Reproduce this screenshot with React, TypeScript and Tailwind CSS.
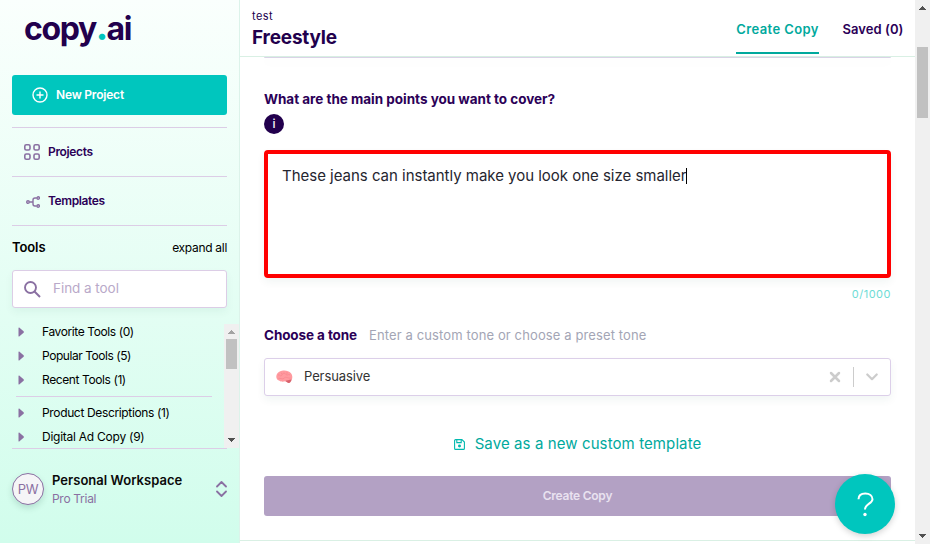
import React from 'react';

function ArrowUp({ color }: { color: string }) {
  return (
    <svg width="7" height="4" viewBox="0 0 7 4" fill={color} shapeRendering="crispEdges">
      <path d="M3 0h1v1h1v1h1v1h1v1H0V3h1V2h1V1h1z" />
    </svg>
  );
}

function ArrowDown() {
  return (
    <svg width="7" height="4" viewBox="0 0 7 4" fill="#505050" shapeRendering="crispEdges">
      <path d="M0 0h7v1H6v1H5v1H4v1H3V3H2V2H1V1H0z" />
    </svg>
  );
}

function ToolRow({ label, track }: { label: string; track: string }) {
  return (
    <div className="flex h-6 items-center pl-[6px]">
      <svg width="6" height="10" viewBox="0 0 6 10" fill="#8a70a2">
        <path d="M.5 1C.5.4 1 .3 1.500.7L5.600 4.300c.4.4.4 1 0 1.400L1.500 9.300C1 9.700.5 9.600.5 9z" />
      </svg>
      <span className={`ml-[18px] whitespace-nowrap text-[12px] text-black ${track}`}>{label}</span>
    </div>
  );
}

function Sidebar() {
  return (
    <aside className="flex h-[543px] w-60 shrink-0 flex-col border-r border-[#dcf3ea] bg-linear-to-b from-[#fafffd] to-[#d1fdec] pl-3">
      <div className="h-[75px] w-[215px] pt-[10px] pl-[12px]">
        <div className="text-[32px] leading-[38px] font-bold tracking-[-1.35px] whitespace-nowrap text-[#22004d]">
          copy<span className="font-black text-[#00c4bc]">.</span>ai
        </div>
      </div>
      <button className="flex h-10 w-[215px] shrink-0 items-center rounded-[3px] bg-[#00c6be] pl-5 text-white">
        <svg width="16" height="16" viewBox="0 0 16 16" fill="none" stroke="currentColor" strokeWidth="1.4">
          <circle cx="8" cy="8" r="7" />
          <path d="M8 4.500v7M4.500 8h7" />
        </svg>
        <span className="ml-2 text-[12px] font-semibold tracking-[-0.2px]">New Project</span>
      </button>
      <div className="mt-3 flex h-[49px] w-[215px] shrink-0 items-center border-t border-[#dccde6] pl-3">
        <svg width="16" height="16" viewBox="0 0 16 16" fill="none" stroke="#8a70a2" strokeWidth="1.600">
          <rect x=".8" y=".8" width="5.200" height="5.200" rx="1.500" />
          <rect x="10" y=".8" width="5.200" height="5.200" rx="1.500" />
          <rect x=".8" y="10" width="5.200" height="5.200" rx="1.500" />
          <rect x="10" y="10" width="5.200" height="5.200" rx="1.500" />
        </svg>
        <span className="ml-2 text-[12px] font-semibold tracking-[-0.35px] text-[#2b0057]">Projects</span>
      </div>
      <div className="flex h-[49px] w-[215px] shrink-0 items-center border-t border-[#dccde6] pl-[14px]">
        <svg width="14" height="12" viewBox="0 0 14 12" fill="none" stroke="#8a70a2" strokeWidth="1.400" className="mt-px">
          <circle cx="2" cy="6" r="1.300" />
          <circle cx="12.200" cy="2" r="1.200" />
          <circle cx="12.200" cy="10" r="1.200" />
          <path d="M3.400 6H7M10.800 2H9Q7 2 7 4V8Q7 10 9 10H10.800" />
        </svg>
        <span className="ml-2 text-[12px] font-semibold tracking-[-0.4px] text-[#2b0057]">Templates</span>
      </div>
      <div className="flex h-[45px] w-[215px] shrink-0 items-center justify-between border-t border-[#dccde6] text-black">
        <span className="text-[13px] font-semibold tracking-[-0.1px]">Tools</span>
        <span className="text-[12px] tracking-[-0.3px]">expand all</span>
      </div>
      <div className="flex h-[38px] w-[215px] shrink-0 items-center rounded-[3px] border border-[#dccde6] bg-white pl-[11px] shadow-[0_4px_8px_rgba(0,80,60,0.05)]">
        <svg width="17" height="17" viewBox="0 0 17 17" fill="none" stroke="#8a70a2" strokeWidth="1.900">
          <circle cx="6.500" cy="6.500" r="5.500" />
          <path d="m10.500 10.500 5.500 5.500" />
        </svg>
        <span className="ml-3 pb-px text-[13.5px] tracking-[-0.05px] text-[#b9a9c9]">Find a tool</span>
      </div>
      <div className="flex h-[140px] shrink-0 justify-between">
        <div className="mt-3 h-32 w-[200px] overflow-hidden">
          <ToolRow label="Favorite Tools (0)" track="tracking-[-0.4px]" />
          <ToolRow label="Popular Tools (5)" track="tracking-[-0.45px]" />
          <ToolRow label="Recent Tools (1)" track="tracking-[-0.4px]" />
          <div className="mt-1 mb-1 ml-1 h-px bg-[#dccde6]" />
          <ToolRow label="Product Descriptions (1)" track="tracking-[-0.35px]" />
          <ToolRow label="Digital Ad Copy (9)" track="tracking-[-0.25px]" />
        </div>
        <div className="mt-4 flex h-[124px] w-[15px] flex-col items-center bg-[#f0f0f0]">
          <div className="flex h-[15px] items-center"><ArrowUp color="#a3a3a3" /></div>
          <div className="h-[30px] w-[11px] bg-[#c1c1c1]" />
          <div className="mt-auto flex h-[17px] items-center"><ArrowDown /></div>
        </div>
      </div>
      <div className="mr-3 flex grow items-start border-t border-[#dccde6] pt-[15px]">
        <div className="mt-[9px] flex size-8 items-center justify-center rounded-full border border-[#8a70a2] bg-[#f5f5f7] pt-px text-[13px] tracking-[-0.2px] text-[#8a70a2] shadow-[0_3px_6px_rgba(0,60,50,0.15)]">
          PW
        </div>
        <div className="ml-2 pt-[7px]">
          <div className="text-[13px] leading-[19px] font-semibold tracking-[0.03px] text-[#0a0a0a]">Personal Workspace</div>
          <div className="text-[12px] leading-[18px] tracking-[-0.3px] text-[#8a70a2]">Pro Trial</div>
        </div>
        <svg width="11" height="16" viewBox="0 0 11 16" className="mt-[17px] ml-auto" fill="none" stroke="#8a70a2" strokeWidth="1.800" strokeLinecap="round" strokeLinejoin="round">
          <path d="m1 5.500 4.500-4.500L10 5.500M1 10.500l4.500 4.500 4.500-4.500" />
        </svg>
      </div>
    </aside>
  );
}

function Header() {
  return (
    <header className="flex h-[57px] shrink-0 justify-between border-b border-[#d9f0e4] pr-[11px] pl-3">
      <div className="pt-[9px] text-[#22004d]">
        <div className="text-[11px] leading-[14px] tracking-[0.4px]">test</div>
        <div className="mt-[2px] text-[19px] leading-[26px] font-bold tracking-[-0.2px]">Freestyle</div>
      </div>
      <nav className="flex h-[54px] gap-[23px] text-[13px] leading-[58px] font-semibold">
        <div className="w-[83px] border-b-2 border-[#00a99d] text-center tracking-[0.4px] whitespace-nowrap text-[#00a99d]">Create Copy</div>
        <div className="w-[62px] text-center tracking-[0.05px] whitespace-nowrap text-[#2b0057]">Saved (0)</div>
      </nav>
    </header>
  );
}

function Form() {
  return (
    <main className="px-6">
      <div className="h-px rounded-b bg-[#d9d3e6] shadow-[0_4px_8px_rgba(0,80,60,0.08)]" />
      <h2 className="mt-8 text-[13.5px] leading-[18px] font-bold tracking-[-0.02px] text-[#2b0057]">
        What are the main points you want to cover?
      </h2>
      <div className="mt-[6px] flex size-5 items-center justify-center rounded-full bg-[#22004d] text-[12px] font-medium text-white">i</div>
      <div className="mt-4 flex h-32 items-start rounded-[4px] border-4 border-[#ff0000] bg-white pt-[9px] pl-[14px] shadow-[0_4px_8px_rgba(0,80,60,0.06)]">
        <span className="text-[15px] leading-[26px] tracking-[-0.02px] text-[#25252f]">These jeans can instantly make you look one size smaller</span>
        <span className="mt-[5px] h-4 w-px bg-black" />
      </div>
      <div className="mt-2 text-right text-[11px] leading-4 tracking-[0.5px] text-[#6ddcd5]">0/1000</div>
      <div className="mt-[23px] flex h-5 items-center">
        <span className="text-[13.5px] font-bold tracking-[-0.1px] text-[#2b0057]">Choose a tone</span>
        <span className="ml-3 pt-px text-[13px] tracking-[0.12px] text-[#a3a5b5]">Enter a custom tone or choose a preset tone</span>
      </div>
      <div className="mt-[13px] flex h-[38px] items-center rounded-[3px] border border-[#dccfe9] bg-white pl-[11px] shadow-[0_4px_8px_rgba(0,80,60,0.06)]">
        <svg width="17" height="14" viewBox="0 0 17 14">
          <path d="M.3 7C.3 3.500 3 1.200 6 .8c3-.6 7 0 9 2.500 1.500 2 1.700 4.600.8 6.300-1 1-2 .9-2.500 1.400-.5 1.200-2.700 1.200-4 .3C7 11.800 5 12 3 10.500 1.300 10 .4 8.500.3 7Z" fill="#ff9a9f" />
          <path d="M9.300 11c1.500-.8 3.700-.8 6.500-1.400-1 2.500-1.700 3.800-3.300 3.400-1-.2-2-1.200-3.200-2Z" fill="#d9626c" />
          <path d="M2 5c2-.5 2 1 3 1s1-3 3-3 1 2 3 2 1-1 3 0M2.500 8.500c2-.8 3 .8 4.500.3s2-2 3.500-1.500 2 .9 4 .7M5 2.500l1 1.800M11 2v2" fill="none" stroke="#f27d86" strokeWidth=".5" />
        </svg>
        <span className="ml-[11px] pb-px text-[13px] tracking-[-0.1px] text-[#333]">Persuasive</span>
        <svg width="12" height="12" viewBox="0 0 12 12" className="ml-auto" fill="none" stroke="#cccccc" strokeWidth="2.500" strokeLinecap="round">
          <path d="m2 2 8 8M10 2l-8 8" />
        </svg>
        <div className="ml-3 h-5 w-px bg-[#cccccc]" />
        <svg width="12" height="8" viewBox="0 0 12 8" className="mr-3 ml-3" fill="none" stroke="#cccccc" strokeWidth="2.200" strokeLinecap="round" strokeLinejoin="round">
          <path d="m1.300 1.500 4.700 4.700 4.700-4.700" />
        </svg>
      </div>
      <div className="mt-[35px] flex h-6 items-center justify-center text-[#00a99d]">
        <svg width="11" height="11" viewBox="0 0 11 11" fill="none" stroke="#00b9ae" strokeWidth="1.100" className="mt-[3px]">
          <path d="M1.600.6h6.300l2.500 2.500v6.300a1 1 0 0 1-1 1H1.600a1 1 0 0 1-1-1V1.600a1 1 0 0 1 1-1zM2.800.6v3h4.400v-3" />
          <circle cx="5.500" cy="7" r=".9" fill="#00b9ae" />
        </svg>
        <span className="ml-[10px] pt-[2px] text-[15px] tracking-[0.1px]">Save as a new custom template</span>
      </div>
      <button className="mt-[21px] flex h-10 w-full items-center justify-center rounded-[3px] bg-[#b3a1c4] text-[12px] font-semibold tracking-[-0.25px] text-[#e9e2f0]">
        Create Copy
      </button>
      <div className="-mx-6 mt-6 h-px bg-[#d9f0e4]" />
    </main>
  );
}

export default function App() {
  return (
    <div className="relative flex h-[544px] w-[930px] overflow-hidden bg-white font-['Inter','Liberation_Sans',sans-serif]">
      <Sidebar />
      <section className="flex w-[675px] shrink-0 flex-col">
        <Header />
        <Form />
      </section>
      <div className="flex h-[544px] w-[15px] shrink-0 flex-col items-center bg-[#f0f0f0]">
        <div className="flex h-[47px] items-start pt-[6px]"><ArrowUp color="#505050" /></div>
        <div className="h-[71px] w-[11px] bg-[#c1c1c1]" />
        <div className="mt-auto flex h-[16px] items-center"><ArrowDown /></div>
      </div>
      <button className="absolute top-[474px] left-[835px] flex size-[60px] items-center justify-center rounded-full bg-[#00c6be] shadow-[0_2px_6px_rgba(0,0,0,0.18)]">
        <svg width="17" height="25" viewBox="0 0 17 25" fill="none" stroke="white" strokeWidth="2">
          <path d="M1.500 7.300C1.500 3.500 4.300 1.500 8.300 1.500S15.500 3.700 15.500 7.200C15.500 11.500 8 12 8 17.500" />
          <circle cx="8" cy="22.500" r="1.700" fill="white" stroke="none" />
        </svg>
      </button>
    </div>
  );
}
